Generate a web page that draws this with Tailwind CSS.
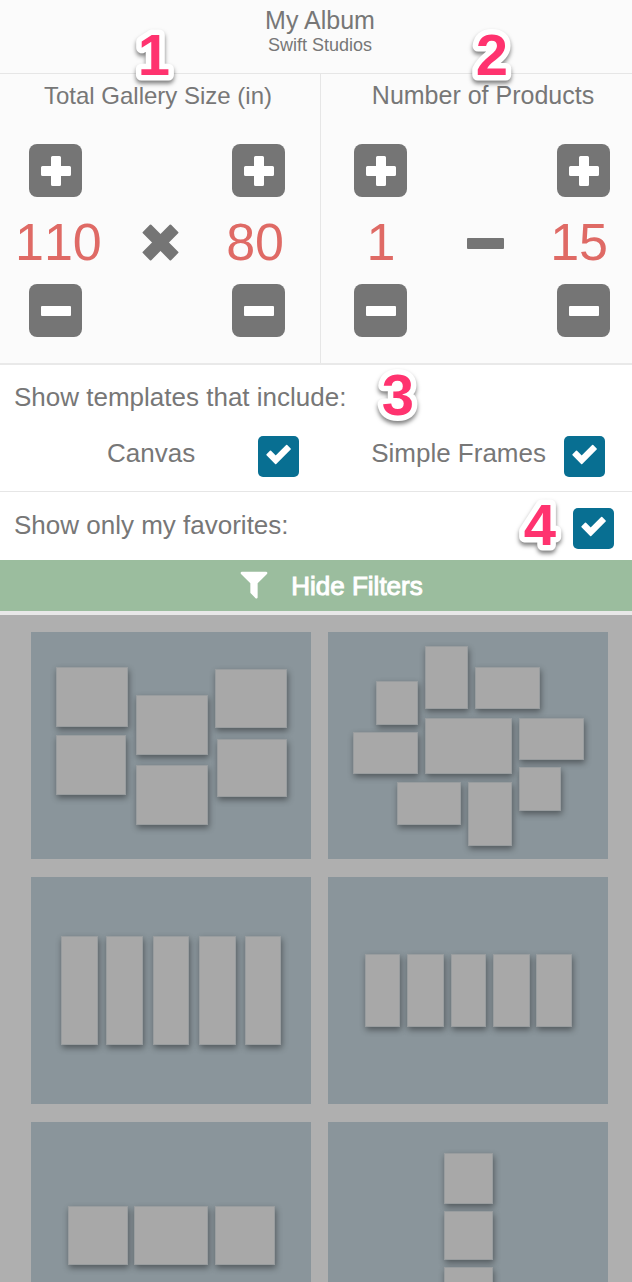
<!DOCTYPE html>
<html lang="en">
<head>
  <meta charset="UTF-8">
  <meta name="viewport" content="width=device-width, initial-scale=1">
  <title>My Album</title>
  <script src="https://cdn.jsdelivr.net/npm/@tailwindcss/browser@4"></script>
</head>
<body class="h-screen overflow-hidden flex flex-col bg-[#afafaf] text-[#777] font-['Liberation_Sans',Arial,sans-serif]">

  <!-- shared icons -->
  <svg class="hidden">
    <symbol id="plus" viewBox="0 0 30 30"><path d="M11.5 0h7a1.500 1.500 0 0 1 1.500 1.500V10h8.500A1.500 1.500 0 0 1 30 11.500v7a1.500 1.500 0 0 1-1.500 1.500H20v8.500a1.500 1.500 0 0 1-1.500 1.500h-7a1.500 1.500 0 0 1-1.500-1.500V20H1.500A1.500 1.500 0 0 1 0 18.500v-7A1.500 1.500 0 0 1 1.500 10H10V1.500A1.500 1.500 0 0 1 11.500 0z" fill="currentColor"/></symbol>
    <symbol id="minus" viewBox="0 0 30 30"><rect y="10" width="30" height="10" rx="1" fill="currentColor"/></symbol>
    <symbol id="check" viewBox="0 0 29 29"><path d="M6.500 11.400 11.700 16.600 22.700 5.600 26.100 9 11.700 23.400 3.100 14.800z" fill="currentColor" stroke="currentColor" stroke-width="1.600" stroke-linejoin="round"/></symbol>
  </svg>

  <header class="relative shrink-0 bg-[#fbfbfb] border-b border-[#e6e6e6] pt-1.5 pb-[18px] pl-2 text-center">
    <h1 class="text-[25px] leading-[29px]">My Album</h1>
    <p class="text-[18px] leading-5">Swift Studios</p>
  </header>

  <main class="relative flex-1 min-h-0 flex flex-col">
    <div class="shrink-0 flex bg-[#fbfbfb] border-b-2 border-[#e9e9e9]">
      <section class="relative w-[321px] border-r border-[#e6e6e6] pt-[7px] pb-[26px]">
        <h2 class="text-[24px] leading-[29px] text-center pr-1">Total Gallery Size (in)</h2>
        <div class="mt-[34px] flex justify-between pl-[29px] pr-[35px]">
          <button aria-label="Increase width" class="size-[53px] rounded-lg bg-[#757575] text-white grid place-items-center"><svg class="size-[30px]"><use href="#plus"/></svg></button>
          <button aria-label="Increase height" class="size-[53px] rounded-lg bg-[#757575] text-white grid place-items-center"><svg class="size-[30px]"><use href="#plus"/></svg></button>
        </div>
        <div class="mt-[15px] flex justify-between items-center pl-[15px] pr-9 text-[52px] leading-[60px] text-[#df6a65] [font-kerning:none]">
          <output class="w-20 text-center">110</output>
          <svg class="w-[37px] h-[37px] text-[#757575]" viewBox="0 0 37 37"><g fill="currentColor" transform="rotate(45 18.500 18.500)"><rect x="-1.500" y="12.500" width="40" height="12" rx="1"/><rect x="12.500" y="-1.500" width="12" height="40" rx="1"/></g></svg>
          <output>80</output>
        </div>
        <div class="mt-3 flex justify-between pl-[29px] pr-[35px]">
          <button aria-label="Decrease width" class="size-[53px] rounded-lg bg-[#757575] text-white grid place-items-center"><svg class="size-[30px]"><use href="#minus"/></svg></button>
          <button aria-label="Decrease height" class="size-[53px] rounded-lg bg-[#757575] text-white grid place-items-center"><svg class="size-[30px]"><use href="#minus"/></svg></button>
        </div>
        <svg class="absolute left-[130px] -top-[50px] w-12 h-[64px] overflow-visible drop-shadow-[0_3px_2px_rgba(0,0,0,0.5)]"><text x="24" y="51" text-anchor="middle" font-size="58" font-weight="bold" fill="#ff336f" stroke="#fff" stroke-width="11" stroke-linejoin="round" paint-order="stroke">1</text></svg>
      </section>

      <section class="relative flex-1 pt-[7px] pb-[26px]">
        <h2 class="text-[25px] leading-[29px] text-center pl-[13px]">Number of Products</h2>
        <div class="mt-[34px] flex justify-between pl-[33px] pr-[22px]">
          <button aria-label="Increase minimum" class="size-[53px] rounded-lg bg-[#757575] text-white grid place-items-center"><svg class="size-[30px]"><use href="#plus"/></svg></button>
          <button aria-label="Increase maximum" class="size-[53px] rounded-lg bg-[#757575] text-white grid place-items-center"><svg class="size-[30px]"><use href="#plus"/></svg></button>
        </div>
        <div class="mt-[15px] flex justify-between items-center pl-5 pr-6 text-[52px] leading-[60px] text-[#df6a65] [font-kerning:none]">
          <output class="w-20 text-center">1</output>
          <svg class="w-[37px] h-[37px] text-[#757575]" viewBox="0 0 37 37"><rect y="14" width="37" height="11" rx="1" fill="currentColor"/></svg>
          <output>15</output>
        </div>
        <div class="mt-3 flex justify-between pl-[33px] pr-[22px]">
          <button aria-label="Decrease minimum" class="size-[53px] rounded-lg bg-[#757575] text-white grid place-items-center"><svg class="size-[30px]"><use href="#minus"/></svg></button>
          <button aria-label="Decrease maximum" class="size-[53px] rounded-lg bg-[#757575] text-white grid place-items-center"><svg class="size-[30px]"><use href="#minus"/></svg></button>
        </div>
        <svg class="absolute left-[147px] -top-[50px] w-12 h-[64px] overflow-visible drop-shadow-[0_3px_2px_rgba(0,0,0,0.5)]"><text x="24" y="51" text-anchor="middle" font-size="58" font-weight="bold" fill="#ff336f" stroke="#fff" stroke-width="11" stroke-linejoin="round" paint-order="stroke">2</text></svg>
      </section>
    </div>

    <section class="relative shrink-0 bg-white border-b border-[#e6e6e6] pt-[17px] pb-3.5 text-[26px] leading-[30px]">
      <h2 class="pl-3.5">Show templates that include:</h2>
      <div class="mt-6 flex justify-between pl-[107px] pr-[27px]">
        <label class="flex items-start gap-[63px]">
          <span class="pt-0.5">Canvas</span>
          <span class="grid">
            <input type="checkbox" checked class="peer col-start-1 row-start-1 appearance-none size-[41px] rounded-[5px] bg-[#086f92]">
            <svg class="col-start-1 row-start-1 size-[29px] ml-1.5 mt-1 text-white pointer-events-none invisible peer-checked:visible"><use href="#check"/></svg>
          </span>
        </label>
        <label class="flex items-start gap-[18px]">
          <span class="pt-0.5">Simple Frames</span>
          <span class="grid">
            <input type="checkbox" checked class="peer col-start-1 row-start-1 appearance-none size-[41px] rounded-[5px] bg-[#086f92]">
            <svg class="col-start-1 row-start-1 size-[29px] ml-1.5 mt-1 text-white pointer-events-none invisible peer-checked:visible"><use href="#check"/></svg>
          </span>
        </label>
      </div>
      <svg class="absolute left-[374px] -top-px w-12 h-[64px] overflow-visible drop-shadow-[0_3px_2px_rgba(0,0,0,0.5)]"><text x="24" y="51" text-anchor="middle" font-size="58" font-weight="bold" fill="#ff336f" stroke="#fff" stroke-width="11" stroke-linejoin="round" paint-order="stroke">3</text></svg>
    </section>

    <section class="relative shrink-0 bg-white pt-4 pb-[11px] text-[26px] leading-[30px]">
      <label class="flex items-start justify-between pl-3.5 pr-[18px]">
        <span class="pt-0.5">Show only my favorites:</span>
        <span class="grid">
          <input type="checkbox" checked class="peer col-start-1 row-start-1 appearance-none size-[41px] rounded-[5px] bg-[#086f92]">
          <svg class="col-start-1 row-start-1 size-[29px] ml-1.5 mt-1 text-white pointer-events-none invisible peer-checked:visible"><use href="#check"/></svg>
        </span>
      </label>
      <svg class="absolute right-[68px] top-[2px] w-12 h-[64px] overflow-visible drop-shadow-[0_3px_2px_rgba(0,0,0,0.5)]"><text x="24" y="51" text-anchor="middle" font-size="58" font-weight="bold" fill="#ff336f" stroke="#fff" stroke-width="11" stroke-linejoin="round" paint-order="stroke">4</text></svg>
    </section>

    <button class="shrink-0 h-[55px] w-full pl-7 flex items-center justify-center gap-5 bg-[#9bbd9e] border-b-4 border-[#e8e8e8] text-white text-[26px] leading-[30px] [-webkit-text-stroke:1px_white]">
      <svg class="size-[34px] mb-1" viewBox="0 0 1792 1792"><path d="M1595 295q17 41-14 70l-493 493v742q0 42-39 59-13 5-25 5-27 0-45-19l-256-256q-19-19-19-45v-486l-493-493q-31-29-14-70 17-39 59-39h1280q42 0 59 39z" fill="currentColor"/></svg>
      Hide Filters
    </button>

    <!-- template thumbnails -->
    <div class="flex-1 min-h-0 overflow-hidden">
      <div id="templates" class="grid grid-cols-2 gap-x-[17px] gap-y-[18px] pt-[17px] pl-[31px] pr-6"></div>
    </div>
  </main>

  <script>
    // frames of each template: [x, y, width, height]
    const templates = [
      [[25,35,72,60],[25,103,70,60],[105,63,72,60],[105,133,72,60],[184,37,72,59],[186,107,70,58]],
      [[97,14,43,63],[147,35,65,42],[48,49,42,44],[25,100,65,42],[97,86,87,56],[191,86,65,42],[191,135,42,44],[69,150,64,43],[140,150,44,64]],
      [[30,59,37,109],[75,59,37,109],[122,59,36,109],[168,59,37,109],[214,59,36,109]],
      [[37,77,35,73],[79,77,37,73],[123,77,35,73],[165,77,37,73],[208,77,36,73]],
      [[37,84,60,59],[103,84,74,59],[184,84,60,59]],
      [[116,31,49,51],[116,89,49,49],[116,145,49,49]]
    ];

    document.getElementById('templates').innerHTML = templates.map(frames => `
      <svg class="w-full bg-[#8a959b]" viewBox="0 0 280 227">
        ${frames.map(([x, y, w, h]) => `
          <g class="drop-shadow-[1px_3px_3px_rgba(0,0,0,0.4)]">
            <rect x="${x}" y="${y}" width="${w}" height="${h}" fill="#999d9f"/>
            <rect x="${x + 1}" y="${y + 1}" width="${w - 2}" height="${h - 2}" fill="#a8a8a8"/>
          </g>`).join('')}
      </svg>`).join('');
  </script>
</body>
</html>
